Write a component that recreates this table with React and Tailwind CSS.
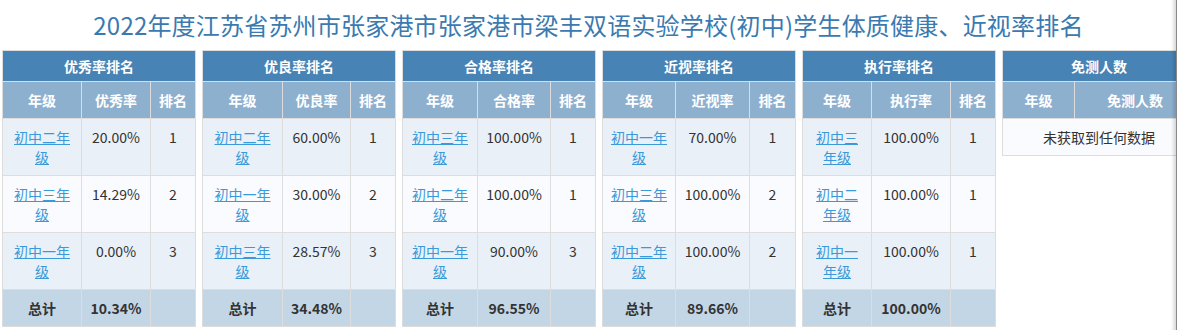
import React from "react";

const tables = [
  {
    title: "优秀率排名",
    rateLabel: "优秀率",
    widths: ["w-[79px]", "w-[69px]", "w-[45px]"],
    rows: [
      ["初中二年级", "20.00%", 1],
      ["初中三年级", "14.29%", 2],
      ["初中一年级", "0.00%", 3],
    ],
    total: "10.34%",
  },
  {
    title: "优良率排名",
    rateLabel: "优良率",
    widths: ["w-[80px]", "w-[68px]", "w-[45px]"],
    rows: [
      ["初中二年级", "60.00%", 1],
      ["初中一年级", "30.00%", 2],
      ["初中三年级", "28.57%", 3],
    ],
    total: "34.48%",
  },
  {
    title: "合格率排名",
    rateLabel: "合格率",
    widths: ["w-[75px]", "w-[73px]", "w-[45px]"],
    rows: [
      ["初中三年级", "100.00%", 1],
      ["初中二年级", "100.00%", 1],
      ["初中一年级", "90.00%", 3],
    ],
    total: "96.55%",
  },
  {
    title: "近视率排名",
    rateLabel: "近视率",
    widths: ["w-[73px]", "w-[74px]", "w-[46px]"],
    rows: [
      ["初中一年级", "70.00%", 1],
      ["初中三年级", "100.00%", 2],
      ["初中二年级", "100.00%", 2],
    ],
    total: "89.66%",
  },
  {
    title: "执行率排名",
    rateLabel: "执行率",
    widths: ["w-[69px]", "w-[79px]", "w-[45px]"],
    rows: [
      ["初中三年级", "100.00%", 1],
      ["初中二年级", "100.00%", 1],
      ["初中一年级", "100.00%", 1],
    ],
    total: "100.00%",
  },
];

const cell = "border border-[#dddddd] px-2 py-2 leading-5 align-top text-center";
const totalCell = "border border-[#dddddd] px-2 py-2 leading-5 align-middle text-center";
const head = "border border-[#dddddd] px-2 py-2 leading-5 text-center font-bold text-white bg-[#8db0cf] whitespace-nowrap";
const caption = "border border-[#dddddd] px-2 py-[5px] leading-5 text-center font-bold text-white bg-[#4783b5]";

const RankTable = ({ t }) => (
  <table className="table-fixed border-collapse w-[193px] shrink-0 text-[#333333]">
    <colgroup>
      {t.widths.map((w, i) => (
        <col key={i} className={w} />
      ))}
    </colgroup>
    <thead>
      <tr>
        <th colSpan={3} className={caption}>{t.title}</th>
      </tr>
      <tr>
        <th className={head}>年级</th>
        <th className={head}>{t.rateLabel}</th>
        <th className={head}>排名</th>
      </tr>
    </thead>
    <tbody>
      {t.rows.map((r, i) => (
        <tr key={i} className={i % 2 === 0 ? "bg-[#e9f0f8]" : "bg-[#f9fbfe]"}>
          <td className={cell}>
            <a href="#" className="text-[#3a9ad9] underline">{r[0]}</a>
          </td>
          <td className={cell}>{r[1]}</td>
          <td className={cell}>{r[2]}</td>
        </tr>
      ))}
      <tr className="bg-[#c3d6e5] font-bold">
        <td className={totalCell}>总计</td>
        <td className={totalCell}>{t.total}</td>
        <td className={totalCell}></td>
      </tr>
    </tbody>
  </table>
);

const App = () => {
  return (
    <div
      className="relative w-[1177px] h-[330px] overflow-hidden bg-white text-[14px]"
      style={{ fontFamily: '"Noto Sans CJK SC", "Noto Sans", sans-serif' }}
    >
      <h1 className="h-[50px] flex items-center justify-center text-[24px] font-normal text-[#3a7ab0] tracking-[0.2px]">
        2022年度江苏省苏州市张家港市张家港市梁丰双语实验学校(初中)学生体质健康、近视率排名
      </h1>

      <div className="flex gap-[6px] pl-[2px] items-start">
        {tables.map((t) => (
          <RankTable key={t.title} t={t} />
        ))}

        <table className="table-fixed border-collapse w-[193px] shrink-0 text-[#333333]">
          <colgroup>
            <col className="w-[72px]" />
            <col className="w-[121px]" />
          </colgroup>
          <thead>
            <tr>
              <th colSpan={2} className={caption}>免测人数</th>
            </tr>
            <tr>
              <th className={head}>年级</th>
              <th className={head}>免测人数</th>
            </tr>
          </thead>
          <tbody>
            <tr className="bg-[#f9fbfe]">
              <td colSpan={2} className="border border-[#dddddd] px-2 py-2 leading-5 text-center">
                未获取到任何数据
              </td>
            </tr>
          </tbody>
        </table>
      </div>

      <div className="absolute top-0 right-0 h-full w-[6px] bg-gradient-to-r from-transparent to-black/15 border-r border-[#8a8a8a]" />
    </div>
  );
};

export default App;
